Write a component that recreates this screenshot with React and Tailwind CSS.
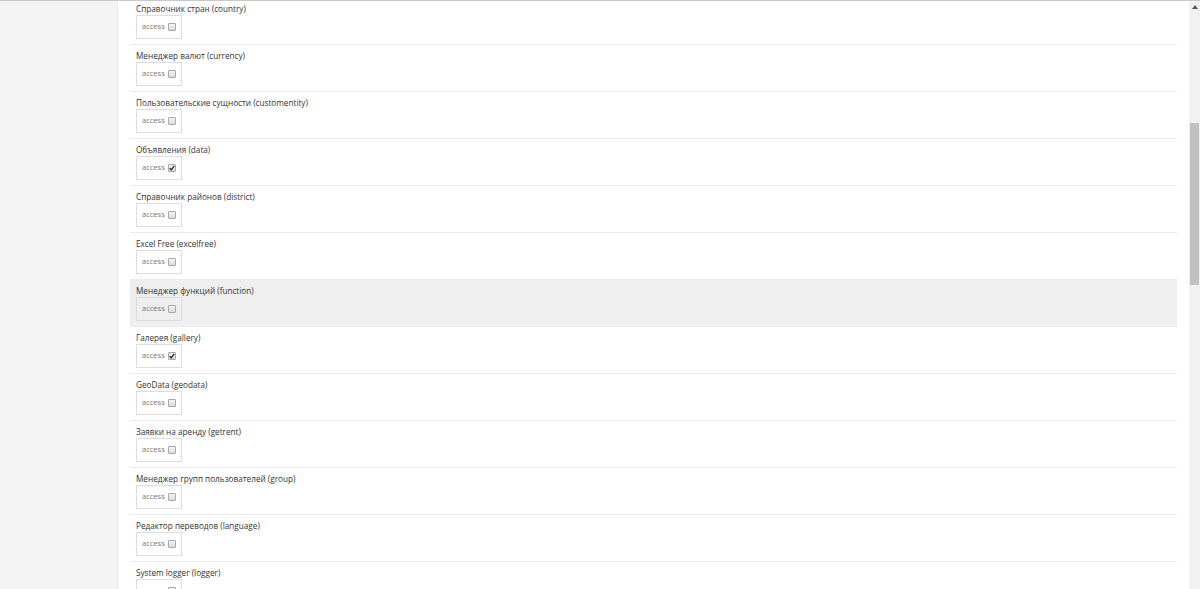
import React from "react";

const modules = [
  { title: "Справочник стран (country)", checked: false },
  { title: "Менеджер валют (currency)", checked: false },
  { title: "Пользовательские сущности (customentity)", checked: false },
  { title: "Объявления (data)", checked: true },
  { title: "Справочник районов (district)", checked: false },
  { title: "Excel Free (excelfree)", checked: false },
  { title: "Менеджер функций (function)", checked: false, hover: true },
  { title: "Галерея (gallery)", checked: true },
  { title: "GeoData (geodata)", checked: false },
  { title: "Заявки на аренду (getrent)", checked: false },
  { title: "Менеджер групп пользователей (group)", checked: false },
  { title: "Редактор переводов (language)", checked: false },
  { title: "System logger (logger)", checked: false },
];

function Check({ checked }) {
  return (
    <span className="w-[8px] h-[8px] border border-[#a9a9a9] rounded-[1px] bg-gradient-to-b from-[#f4f4f4] to-[#dcdcdc] flex items-center justify-center">
      {checked && (
        <svg width="6" height="6" viewBox="0 0 6 6">
          <path d="M0.8 3.2 L2.3 4.8 L5.3 0.9" stroke="#222" strokeWidth="1.3" fill="none" />
        </svg>
      )}
    </span>
  );
}

function ModuleRow({ item }) {
  return (
    <div className={`h-[47px] border-b border-[#ebebeb] pl-[6px] pt-[4px] ${item.hover ? "bg-[#efefef]" : ""}`}>
      <div className="text-[8.2px] leading-[13px] text-[#333]">{item.title}</div>
      <div className="w-[46px] h-[24px] border border-[#dddddd] flex items-center pl-[5px] gap-[3px]">
        <span className="text-[7.5px] text-[#777] leading-none">access</span>
        <Check checked={item.checked} />
      </div>
    </div>
  );
}

export default function App() {
  return (
    <div className="h-[589px] w-[1200px] overflow-hidden border-t border-[#c9c9c9] flex bg-white" style={{ fontFamily: '"Open Sans", "Liberation Sans", sans-serif' }}>
      <div className="w-[118px] shrink-0 bg-[#f3f3f3] border-r border-[#ececec]"></div>
      <div className="flex-1 pl-[12px] pr-[12px] overflow-hidden">
        <div className="-mt-[3px]">
          {modules.map((item, idx) => (
            <ModuleRow key={idx} item={item} />
          ))}
        </div>
      </div>
      <div className="w-[11px] shrink-0 bg-[#f1f1f1] flex flex-col items-center">
        <svg width="6" height="4" viewBox="0 0 6 4" className="mt-[4px]">
          <path d="M3 0 L6 4 L0 4 Z" fill="#555" />
        </svg>
        <div className="w-[9px] h-[162px] bg-[#c1c1c1] mt-[114px]"></div>
      </div>
    </div>
  );
}
